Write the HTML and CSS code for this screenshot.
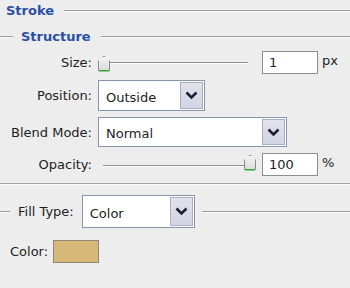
FILE: index.html
```html
<!DOCTYPE html>
<html>
<head>
<meta charset="utf-8">
<link rel="stylesheet" href="styles.css">
</head>
<body>
<div class="panel">
  <div class="legend legend-main">
    <span class="title">Stroke</span>
    <span class="rule"></span>
  </div>
  <div class="legend legend-sub">
    <span class="rule rule-lead"></span>
    <span class="title">Structure</span>
    <span class="rule"></span>
  </div>

  <div class="form">
    <div class="label">Size:</div>
    <div class="ctrl">
      <div class="slider slider-size">
        <span class="thumb"></span>
        <span class="track"></span>
      </div>
      <div class="input">1</div>
      <span class="unit">px</span>
    </div>

    <div class="label">Position:</div>
    <div class="ctrl">
      <div class="select select-pos">
        <span class="value">Outside</span>
        <span class="btn"><svg width="13" height="9" viewBox="0 0 13 9"><path d="M1.5 1.5 L6.5 6.5 L11.5 1.5" fill="none" stroke="#1c1f33" stroke-width="2.6"/></svg></span>
      </div>
    </div>

    <div class="label">Blend Mode:</div>
    <div class="ctrl">
      <div class="select select-blend">
        <span class="value">Normal</span>
        <span class="btn"><svg width="13" height="9" viewBox="0 0 13 9"><path d="M1.5 1.5 L6.5 6.5 L11.5 1.5" fill="none" stroke="#1c1f33" stroke-width="2.6"/></svg></span>
      </div>
    </div>

    <div class="label">Opacity:</div>
    <div class="ctrl">
      <div class="slider slider-opacity">
        <span class="track"></span>
        <span class="thumb"></span>
      </div>
      <div class="input">100</div>
      <span class="unit">%</span>
    </div>
  </div>

  <div class="separator"></div>

  <div class="fill-row">
    <span class="rule rule-lead-fill"></span>
    <span class="label-inline">Fill Type:</span>
    <div class="select select-fill">
      <span class="value">Color</span>
      <span class="btn"><svg width="13" height="9" viewBox="0 0 13 9"><path d="M1.5 1.5 L6.5 6.5 L11.5 1.5" fill="none" stroke="#1c1f33" stroke-width="2.6"/></svg></span>
    </div>
    <span class="rule"></span>
  </div>

  <div class="color-row">
    <span class="label-inline">Color:</span>
    <span class="swatch"></span>
  </div>
</div>
</body>
</html>
```

FILE: styles.css
```css
html, body {
  margin: 0;
  padding: 0;
  background: #ededed;
}

body {
  width: 350px;
  height: 288px;
  overflow: hidden;
  font-family: "DejaVu Sans", Verdana, sans-serif;
  font-size: 13px;
  color: #1e1e1e;
}

.panel {
  display: flex;
  flex-direction: column;
}

.legend {
  display: flex;
  align-items: center;
}

.legend .title {
  font-weight: bold;
  color: #2a4fa6;
  font-size: 13px;
  line-height: 16px;
}

.legend-main {
  height: 16px;
  padding-top: 3px;
  padding-left: 6px;
}

.legend-main .title {
  margin-right: 10px;
}

.legend-sub {
  height: 16px;
  margin-top: 10px;
}

.legend-sub .title {
  margin: 0 10px 0 8px;
}

.rule {
  flex: 1;
  height: 1px;
  background: #9b9b9b;
  border-bottom: 1px solid #f8f8f8;
}

.rule-lead {
  flex: 0 0 13px;
}

.form {
  display: grid;
  grid-template-columns: 92px 1fr;
  column-gap: 6px;
  row-gap: 6px;
  grid-template-rows: 23px 31px 30px 23px;
  margin-top: 6px;
}

.label {
  text-align: right;
  display: flex;
  align-items: center;
  justify-content: flex-end;
}

.ctrl {
  display: flex;
  align-items: center;
}

.slider {
  display: flex;
  align-items: center;
  height: 20px;
}

.slider-size {
  width: 150px;
  margin-right: 14px;
}

.slider-opacity {
  width: 153px;
  margin-left: 5px;
  margin-right: 6px;
  position: relative;
}

.track {
  flex: 1;
  height: 1px;
  background: #8e8e8e;
  border-bottom: 1px solid #fdfdfd;
}

.slider-opacity .track {
  margin-top: 2px;
}

.thumb {
  width: 12px;
  height: 16px;
  flex: 0 0 12px;
  box-sizing: border-box;
  background: linear-gradient(#f4f4f4, #dcdcdc);
  border: 1px solid #8a8a8a;
  border-bottom: 2px solid #35a337;
  clip-path: polygon(50% 0, 100% 35%, 100% 100%, 0 100%, 0 35%);
  border-radius: 0 0 2px 2px;
}

.slider-size .thumb {
  margin-top: 2px;
}

.slider-opacity .thumb {
  margin-top: -4px;
}

.input {
  width: 56px;
  height: 23px;
  box-sizing: border-box;
  background: #fff;
  border: 1px solid #8c8c8c;
  padding-left: 6px;
  line-height: 21px;
  font-size: 13px;
}

.unit {
  margin-left: 4px;
  margin-top: -4px;
}

.select {
  display: flex;
  align-items: stretch;
  box-sizing: border-box;
  background: #fff;
  border: 1px solid #8795aa;
  height: 100%;
}

.select .value {
  flex: 1;
  display: flex;
  align-items: center;
  padding-left: 7px;
  padding-top: 3px;
}

.select .btn {
  width: 23px;
  margin: 1px;
  box-sizing: border-box;
  display: flex;
  align-items: center;
  justify-content: center;
  background: linear-gradient(#e2e2ec, #d3d4e2);
  border: 1px solid #a9adc0;
}

.select-pos {
  width: 107px;
}

.select-blend {
  width: 189px;
}

.select-fill {
  width: 113px;
  height: 33px;
  margin-right: 7px;
}

.separator {
  margin-top: 7px;
  height: 1px;
  background: #a3a3a3;
  border-bottom: 1px solid #fafafa;
}

.fill-row {
  display: flex;
  align-items: center;
  margin-top: 10px;
}

.rule-lead-fill {
  flex: 0 0 10px;
}

.fill-row .label-inline {
  margin: 0 8px 0 8px;
}

.color-row {
  display: flex;
  align-items: center;
  margin-top: 12px;
  padding-left: 10px;
}

.color-row .label-inline {
  margin-right: 5px;
}

.swatch {
  width: 46px;
  height: 23px;
  box-sizing: border-box;
  background: #d8b878;
  border: 1px solid #8c8777;
}
```
